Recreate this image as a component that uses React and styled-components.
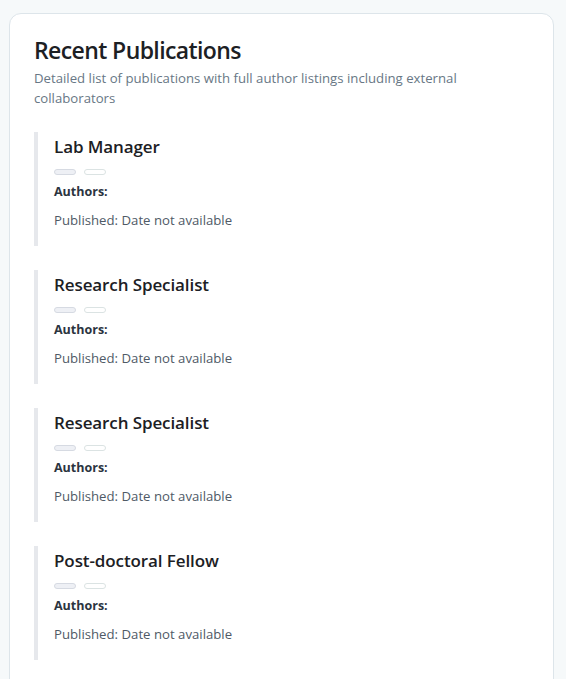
import React from "react";
import styled, { createGlobalStyle } from "styled-components";

const Global = createGlobalStyle`
  html, body { margin: 0; padding: 0; background: #f6f9fa; }
  body { font-family: "Open Sans", "Noto Sans", sans-serif; color: #1f2328; }
`;

const Page = styled.div`
  padding: 13px 12px 0 9px;
`;

const Card = styled.section`
  background: #ffffff;
  border: 1px solid #dde5ea;
  border-radius: 12px;
  padding: 20px 24px 24px 24px;
  min-height: 700px;
`;

const Title = styled.h2`
  margin: 0;
  font-size: 23px;
  line-height: 32px;
  font-weight: 600;
  color: #1c2024;
  letter-spacing: -0.6px;
`;

const Subtitle = styled.p`
  margin: 2px 0 24px 0;
  font-size: 13.2px;
  line-height: 20px;
  color: #687785;
  max-width: 440px;
`;

const List = styled.div`
  display: flex;
  flex-direction: column;
  gap: 24px;
`;

const Item = styled.article`
  border-left: 4px solid #e6e8ec;
  padding: 1px 0 16px 16px;
`;

const ItemTitle = styled.h3`
  margin: 0;
  font-size: 17px;
  line-height: 28px;
  font-weight: 600;
  color: #1c2024;
  letter-spacing: -0.1px;
`;

const Badges = styled.div`
  display: flex;
  gap: 8px;
  margin-top: 8px;
`;

const Badge = styled.span`
  display: block;
  width: 22px;
  height: 6px;
  box-sizing: border-box;
  border-radius: 4px;
  border: 1px solid ${(p) => (p.$filled ? "#d6dae2" : "#dbe3e3")};
  background: ${(p) => (p.$filled ? "#eef0f5" : "#ffffff")};
`;

const Authors = styled.div`
  margin-top: 7px;
  font-size: 12.5px;
  line-height: 20px;
  font-weight: 700;
  color: #2b3440;
`;

const Published = styled.div`
  margin-top: 8px;
  font-size: 13.2px;
  line-height: 20px;
  color: #4f5a66;
`;

const pubs = ["Lab Manager", "Research Specialist", "Research Specialist", "Post-doctoral Fellow"];

export default function App() {
  return (
    <>
      <Global />
      <Page>
        <Card>
          <Title>Recent Publications</Title>
          <Subtitle>
            Detailed list of publications with full author listings including external collaborators
          </Subtitle>
          <List>
            {pubs.map((t, i) => (
              <Item key={i}>
                <ItemTitle>{t}</ItemTitle>
                <Badges>
                  <Badge $filled />
                  <Badge />
                </Badges>
                <Authors>Authors:</Authors>
                <Published>Published: Date not available</Published>
              </Item>
            ))}
          </List>
        </Card>
      </Page>
    </>
  );
}
